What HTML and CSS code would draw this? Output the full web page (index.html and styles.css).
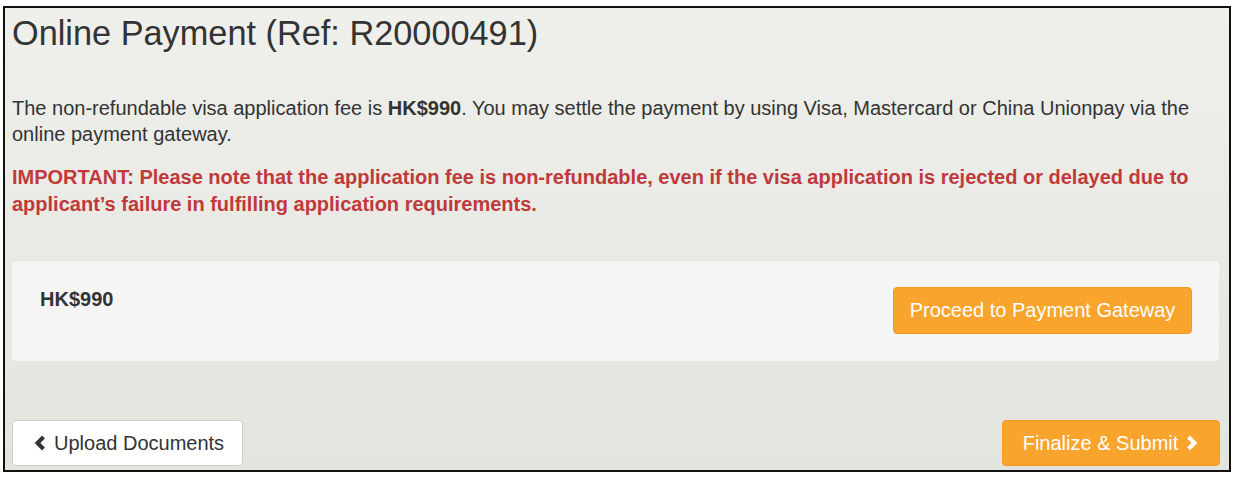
FILE: index.html
```html
<html>
<head>
  <meta charset="UTF-8">
  <title>Online Payment</title>
  <link rel="stylesheet" href="styles.css">
</head>
<body>
  <div class="frame">
    <h2 class="page-title">Online Payment (Ref: R20000491)</h2>
    <p class="intro">The non-refundable visa application fee is <b>HK$990</b>. You may settle the payment by using Visa, Mastercard or China Unionpay via the online payment gateway.</p>
    <p class="warning">IMPORTANT: Please note that the application fee is non-refundable, even if the visa application is rejected or delayed due to applicant’s failure in fulfilling application requirements.</p>

    <div class="pay-panel">
      <div class="amount">HK$990</div>
      <button class="btn btn-orange btn-gateway">Proceed to Payment Gateway</button>
    </div>

    <div class="nav-row">
      <button class="btn btn-white">
        <svg class="chev" viewBox="0 0 14 16"><path d="M10.5 2 L4.5 8 L10.5 14" /></svg>
        Upload Documents
      </button>
      <button class="btn btn-orange btn-submit">
        Finalize &amp; Submit
        <svg class="chev" viewBox="0 0 14 16"><path d="M3.5 2 L9.5 8 L3.5 14" /></svg>
      </button>
    </div>
  </div>
</body>
</html>
```

FILE: styles.css
```css
body {
  margin: 0;
  padding: 0;
  background: #fff;
  font-family: "Liberation Sans", Arial, sans-serif;
  color: #333;
}
.frame {
  margin: 6px 0 0 3px;
  height: 462px;
  width: 1207px;
  border: 2px solid #111;
  padding: 0 10px 0 7px;
  background: linear-gradient(#efefeb, #e4e4df);
  display: flex;
  flex-direction: column;
}
.page-title {
  margin: 7px 0 0 0;
  font-size: 34.3px;
  line-height: 1.1;
  font-weight: normal;
  color: #333;
}
.intro {
  margin: 42px 0 0 0;
  font-size: 20px;
  line-height: 26px;
  color: #333;
}
.warning {
  margin: 17px 0 0 0;
  font-size: 20px;
  line-height: 27px;
  font-weight: bold;
  color: #c0393b;
}
.pay-panel {
  margin-top: 43px;
  background: #f5f5f5;
  border-radius: 4px;
  height: 100px;
  box-sizing: border-box;
  padding: 26px 27px 0 28px;
  display: flex;
  justify-content: space-between;
  align-items: flex-start;
}
.amount {
  font-weight: bold;
  font-size: 20px;
  margin-top: 1px;
}
.btn {
  font-family: "Liberation Sans", Arial, sans-serif;
  font-size: 20px;
  height: 46px;
  border-radius: 4px;
  display: flex;
  align-items: center;
  gap: 7px;
  cursor: pointer;
}
.btn-orange {
  background: #f8a42d;
  border: 1px solid #f29a22;
  color: #fff;
}
.btn-gateway {
  width: 299px;
  height: 47px;
  justify-content: center;
}
.btn-white {
  background: #fff;
  border: 1px solid #ccc;
  color: #333;
  width: 231px;
  padding: 0 0 0 20px;
}
.nav-row {
  margin-top: auto;
  margin-bottom: 4px;
  display: flex;
  justify-content: space-between;
}
.btn-submit {
  width: 218px;
  justify-content: center;
  margin-right: -1px;
}
.chev {
  width: 14px;
  height: 16px;
}
.chev path {
  fill: none;
  stroke: currentColor;
  stroke-width: 4;
  stroke-linejoin: miter;
}
```
